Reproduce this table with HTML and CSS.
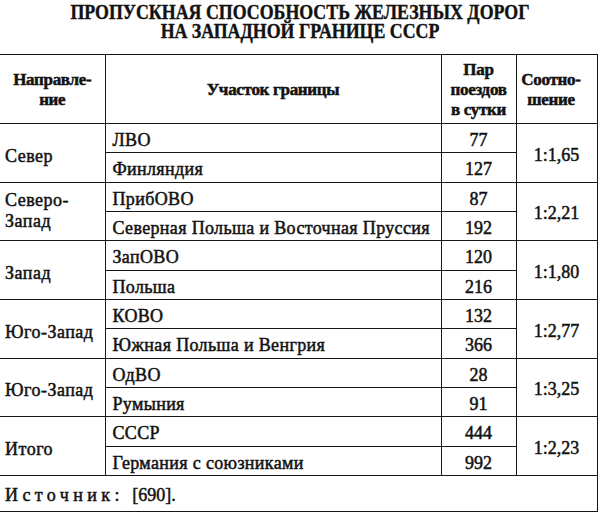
FILE: index.html
```html
<!DOCTYPE html>
<html lang="ru">
<head>
<meta charset="utf-8">
<title>Пропускная способность железных дорог</title>
<link rel="stylesheet" href="styles.css">
</head>
<body>
<h1 class="title">
  <span class="title-line">ПРОПУСКНАЯ СПОСОБНОСТЬ ЖЕЛЕЗНЫХ ДОРОГ</span>
  <span class="title-line">НА ЗАПАДНОЙ ГРАНИЦЕ СССР</span>
</h1>
<table class="grid">
  <colgroup>
    <col class="c-dir">
    <col class="c-sec">
    <col class="c-num">
    <col class="c-ratio">
  </colgroup>
  <thead>
    <tr class="head-row">
      <th class="h-dir">Направле-<br>ние</th>
      <th class="h-sec">Участок границы</th>
      <th class="h-num">Пар<br>поездов<br>в сутки</th>
      <th class="h-ratio">Соотно-<br>шение</th>
    </tr>
  </thead>
  <tbody>
    <tr><td class="dir one" rowspan="2">Север</td><td class="sec">ЛВО</td><td class="num">77</td><td class="ratio" rowspan="2">1:1,65</td></tr>
    <tr><td class="sec">Финляндия</td><td class="num">127</td></tr>
    <tr><td class="dir" rowspan="2">Северо-<br>Запад</td><td class="sec">ПрибОВО</td><td class="num">87</td><td class="ratio" rowspan="2">1:2,21</td></tr>
    <tr><td class="sec">Северная Польша и Восточная Пруссия</td><td class="num">192</td></tr>
    <tr><td class="dir one" rowspan="2">Запад</td><td class="sec">ЗапОВО</td><td class="num">120</td><td class="ratio" rowspan="2">1:1,80</td></tr>
    <tr><td class="sec">Польша</td><td class="num">216</td></tr>
    <tr><td class="dir one" rowspan="2">Юго-Запад</td><td class="sec">КОВО</td><td class="num">132</td><td class="ratio" rowspan="2">1:2,77</td></tr>
    <tr><td class="sec">Южная Польша и Венгрия</td><td class="num">366</td></tr>
    <tr><td class="dir one" rowspan="2">Юго-Запад</td><td class="sec">ОдВО</td><td class="num">28</td><td class="ratio" rowspan="2">1:3,25</td></tr>
    <tr><td class="sec">Румыния</td><td class="num">91</td></tr>
    <tr><td class="dir one" rowspan="2">Итого</td><td class="sec">СССР</td><td class="num">444</td><td class="ratio" rowspan="2">1:2,23</td></tr>
    <tr><td class="sec">Германия с союзниками</td><td class="num">992</td></tr>
  </tbody>
  <tfoot>
    <tr class="source-row"><td class="source" colspan="4"><span class="spaced">Источник:</span> [690].</td></tr>
  </tfoot>
</table>
</body>
</html>
```

FILE: styles.css
```css
html, body {
  margin: 0;
  padding: 0;
  background: #ffffff;
}

body {
  color: #121212;
  font-family: "Liberation Serif", "Times New Roman", serif;
  -webkit-text-stroke: 0.5px #121212;
}

.title {
  margin: 3px 0 0;
  font-size: 21px;
  line-height: 19px;
  font-weight: bold;
  text-align: center;
  -webkit-text-stroke: 0.4px #121212;
}

.title-line {
  display: block;
  transform: scaleX(0.85);
}

.grid {
  margin-top: 13px;
  border-collapse: collapse;
  table-layout: fixed;
  width: 597px;
}

.c-dir { width: 105px; }
.c-sec { width: 336px; }
.c-num { width: 75px; }
.c-ratio { width: 81px; }

.grid th,
.grid td {
  border: 1.5px solid #161616;
  padding: 0;
}

.grid tr > :first-child {
  border-left: none;
}

.head-row {
  height: 69px;
}

.grid th {
  font-size: 17px;
  line-height: 20px;
  font-weight: bold;
  text-align: center;
  vertical-align: middle;
  letter-spacing: -0.3px;
  padding-top: 2px;
  -webkit-text-stroke: 0.5px #121212;
}

.grid th.h-ratio {
  padding-right: 11px;
}

.grid tbody tr {
  height: 29.33px;
}

.grid td {
  font-size: 18px;
  line-height: 20px;
  vertical-align: middle;
}

.grid td.dir {
  padding-left: 5px;
  line-height: 21.5px;
  letter-spacing: 0.5px;
}

.grid td.dir.one {
  padding-top: 7px;
}

.grid td.sec {
  padding-left: 7px;
  padding-top: 4px;
  letter-spacing: 0.35px;
}

.grid td.num {
  text-align: center;
  padding-top: 4px;
}

.grid td.ratio {
  text-align: center;
  padding-top: 4px;
}

.source-row {
  height: 36px;
}

.grid td.source {
  padding-left: 5px;
  padding-top: 4px;
}

.spaced {
  letter-spacing: 4.4px;
  margin-right: 4px;
}
```
